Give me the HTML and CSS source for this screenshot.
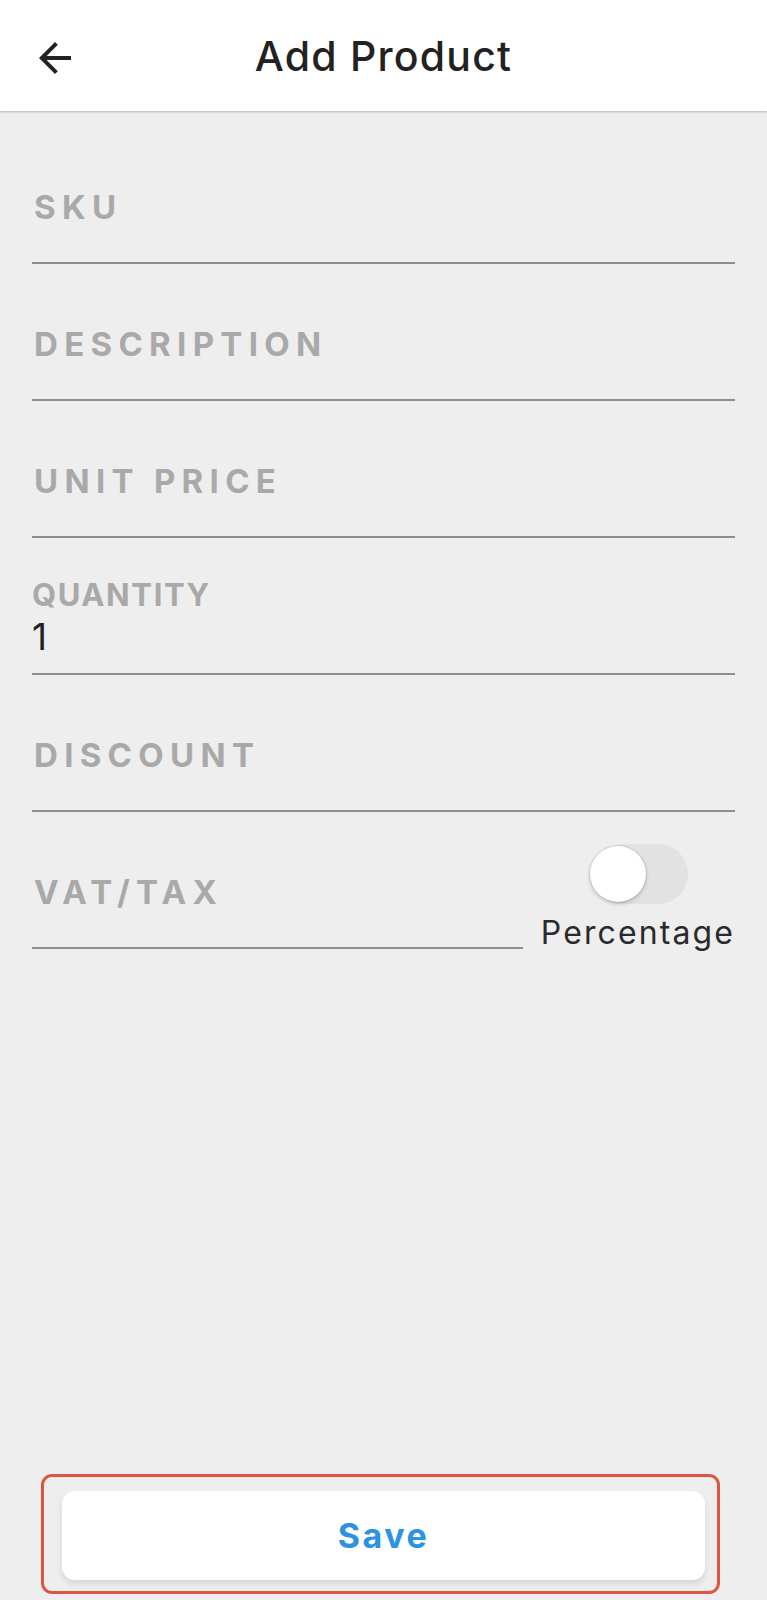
FILE: index.html
```html
<!DOCTYPE html>
<html lang="en">
<head>
<meta charset="utf-8">
<title>Add Product</title>
<link rel="stylesheet" href="styles.css">
</head>
<body>
<div class="screen">
  <header class="appbar">
    <button class="back" aria-label="Back">
      <svg width="48" height="48" viewBox="0 0 24 24"><path d="M20 11H7.83l5.59-5.59L12 4l-8 8 8 8 1.41-1.41L7.83 13H20v-2z" fill="#222"/></svg>
    </button>
    <h1 class="title">Add Product</h1>
    <span></span>
  </header>

  <main class="form">
    <div class="field"><span class="label">SKU</span></div>
    <div class="field"><span class="label">DESCRIPTION</span></div>
    <div class="field"><span class="label">UNIT PRICE</span></div>
    <div class="field filled">
      <span class="label-small">QUANTITY</span>
      <span class="value">1</span>
    </div>
    <div class="field"><span class="label">DISCOUNT</span></div>
    <div class="row">
      <div class="field grow"><span class="label">VAT/TAX</span></div>
      <div class="toggle-col">
        <div class="switch"><div class="thumb"></div></div>
        <span class="toggle-text">Percentage</span>
      </div>
    </div>
  </main>

  <footer class="actions">
    <div class="highlight">
      <button class="save">Save</button>
    </div>
  </footer>
</div>
</body>
</html>
```

FILE: styles.css
```css
* { box-sizing: border-box; }
html, body { margin: 0; padding: 0; }
body {
  background: #eeeeee;
  font-family: Inter, "Noto Sans", "DejaVu Sans", sans-serif;
}
.screen {
  height: 1600px;
  display: flex;
  flex-direction: column;
}
.appbar {
  height: 111px;
  background: #ffffff;
  display: grid;
  grid-template-columns: 1fr auto 1fr;
  align-items: center;
  box-shadow: 0 1px 2px rgba(0,0,0,0.25);
  position: relative;
  z-index: 1;
}
.back {
  border: 0;
  background: none;
  padding: 0;
  margin: 5px 0 0 31px;
  width: 48px;
  height: 48px;
  display: flex;
}
.title {
  margin: 0;
  font-size: 41px;
  font-weight: 500;
  letter-spacing: 1.2px;
  color: #222222;
  line-height: 48px;
}
.form {
  flex: 1;
  padding: 16px 32px 0 32px;
  display: flex;
  flex-direction: column;
}
.field {
  height: 137px;
  border-bottom: 2px solid #8e8e8e;
  display: flex;
  flex-direction: column;
  justify-content: flex-end;
  padding: 0 2px 35px 2px;
}
.label {
  font-size: 33px;
  font-weight: 700;
  color: #a9a9a9;
  letter-spacing: 6.3px;
  line-height: 40px;
}
.field.filled {
  padding: 0 0 14px 0;
}
.label-small {
  font-size: 31px;
  font-weight: 700;
  color: #a9a9a9;
  letter-spacing: 1.6px;
  line-height: 40px;
}
.value {
  font-size: 37px;
  font-weight: 400;
  color: #222222;
  line-height: 44px;
}
.row {
  display: flex;
  align-items: flex-end;
  gap: 18px;
}
.grow { flex: 1; }
.toggle-col {
  display: flex;
  flex-direction: column;
  align-items: center;
  gap: 13px;
}
.switch {
  width: 96px;
  height: 60px;
  border-radius: 30px;
  background: #e2e2e2;
  position: relative;
  margin-left: 4px;
}
.thumb {
  position: absolute;
  left: -2px;
  top: 2px;
  width: 56px;
  height: 56px;
  border-radius: 50%;
  background: #ffffff;
  box-shadow: 0 0 0 1px rgba(0,0,0,0.08), 0 2px 4px rgba(0,0,0,0.2);
}
.toggle-text {
  font-size: 32px;
  font-weight: 400;
  color: #2a2a2a;
  letter-spacing: 2.1px;
  line-height: 32px;
}
.actions {
  padding: 0 47px 6px 41px;
}
.highlight {
  border: 3px solid #e05440;
  border-radius: 11px;
  padding: 14px 12px 11px 18px;
}
.save {
  display: block;
  width: 100%;
  height: 89px;
  border: 0;
  border-radius: 13px;
  background: #ffffff;
  box-shadow: 0 4px 6px rgba(0,0,0,0.1);
  font-family: Inter, "Noto Sans", "DejaVu Sans", sans-serif;
  font-size: 34px;
  font-weight: 700;
  letter-spacing: 2.5px;
  color: #2b93e2;
  padding: 0;
}
```
